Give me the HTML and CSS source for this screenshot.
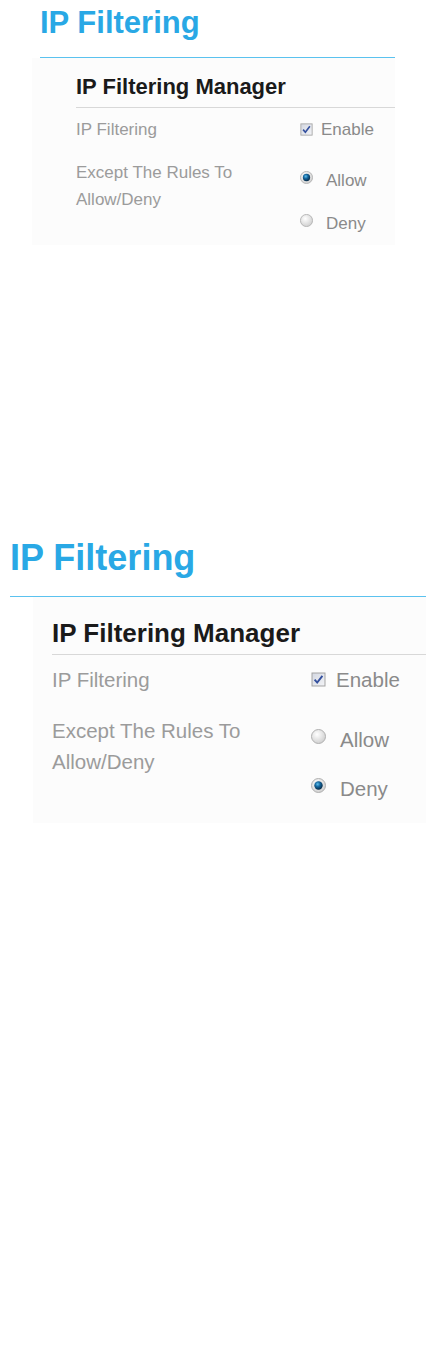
FILE: index.html
```html
<!DOCTYPE html>
<html lang="en">
<head>
<meta charset="utf-8">
<title>IP Filtering</title>
<link rel="stylesheet" href="styles.css">
</head>
<body>
<section class="view v1">
  <h1 class="title">IP Filtering</h1>
  <div class="panel">
    <h2 class="heading">IP Filtering Manager</h2>
    <div class="row row-first">
      <div class="label">IP Filtering</div>
      <div class="control">
        <div class="opt opt-check">
          <svg class="box" viewBox="0 0 15 15"><rect x="0.5" y="0.5" width="14" height="14" fill="#a3a3a3"/><rect x="1.5" y="1.5" width="12" height="12" fill="url(#gb1)"/><path d="M3.6 7.6 L6.2 10.6 L11.4 3.8" fill="none" stroke="#34509e" stroke-width="1.9"/><defs><linearGradient id="gb1" x1="0" y1="0" x2="1" y2="1"><stop offset="0" stop-color="#d4d8e2"/><stop offset="1" stop-color="#f2f3f6"/></linearGradient></defs></svg>
          <span class="otext">Enable</span>
        </div>
      </div>
    </div>
    <div class="row row-last">
      <div class="label">Except The Rules To<br>Allow/Deny</div>
      <div class="control">
        <div class="opt opt-radio">
          <svg class="radio" viewBox="0 0 15 15"><defs><radialGradient id="rg1" cx="0.4" cy="0.35" r="0.7"><stop offset="0" stop-color="#ffffff"/><stop offset="1" stop-color="#cdcdcd"/></radialGradient><radialGradient id="rd1" cx="0.4" cy="0.35" r="0.65"><stop offset="0" stop-color="#5fc0ee"/><stop offset="0.45" stop-color="#14679f"/><stop offset="1" stop-color="#082b47"/></radialGradient></defs><circle cx="7.5" cy="7.5" r="7" fill="url(#rg1)" stroke="#b0b0b0"/><circle cx="7.5" cy="7.5" r="4.2" fill="url(#rd1)"/></svg>
          <span class="otext rtext">Allow</span>
        </div>
        <div class="opt opt-radio">
          <svg class="radio" viewBox="0 0 15 15"><circle cx="7.5" cy="7.5" r="7" fill="url(#rg1)" stroke="#b0b0b0"/></svg>
          <span class="otext rtext">Deny</span>
        </div>
      </div>
    </div>
  </div>
</section>

<section class="view v2">
  <h1 class="title">IP Filtering</h1>
  <div class="panel">
    <h2 class="heading">IP Filtering Manager</h2>
    <div class="row row-first">
      <div class="label">IP Filtering</div>
      <div class="control">
        <div class="opt opt-check">
          <svg class="box" viewBox="0 0 15 15"><rect x="0.5" y="0.5" width="14" height="14" fill="#a3a3a3"/><rect x="1.5" y="1.5" width="12" height="12" fill="url(#gb1)"/><path d="M3.6 7.6 L6.2 10.6 L11.4 3.8" fill="none" stroke="#34509e" stroke-width="1.9"/></svg>
          <span class="otext">Enable</span>
        </div>
      </div>
    </div>
    <div class="row row-last">
      <div class="label">Except The Rules To<br>Allow/Deny</div>
      <div class="control">
        <div class="opt opt-radio">
          <svg class="radio" viewBox="0 0 15 15"><circle cx="7.5" cy="7.5" r="7" fill="url(#rg1)" stroke="#b0b0b0"/></svg>
          <span class="otext rtext">Allow</span>
        </div>
        <div class="opt opt-radio">
          <svg class="radio" viewBox="0 0 15 15"><circle cx="7.5" cy="7.5" r="7" fill="url(#rg1)" stroke="#b0b0b0"/><circle cx="7.5" cy="7.5" r="4.2" fill="url(#rd1)"/></svg>
          <span class="otext rtext">Deny</span>
        </div>
      </div>
    </div>
  </div>
</section>
</body>
</html>
```
FILE: styles.css
```css
html, body {
  margin: 0;
  padding: 0;
  background: #ffffff;
}
body {
  font-family: "Liberation Sans", Arial, sans-serif;
  width: 426px;
  height: 1349px;
  overflow: hidden;
}
.view {
  box-sizing: border-box;
}
.title {
  margin: 0;
  font-weight: bold;
  color: #29a8e5;
  border-bottom: 1px solid #5bc2ef;
}
.panel {
  background: #fcfcfc;
}
.heading {
  margin: 0;
  font-weight: bold;
  color: #1a1a1a;
  border-bottom: 1px solid #d8d8d8;
}
.row {
  display: grid;
}
.label {
  color: #9b9b9b;
}
.control {
  display: flex;
  flex-direction: column;
}
.opt {
  display: flex;
  align-items: flex-start;
}
.otext {
  color: #8a8a8a;
}
.box, .radio {
  flex: none;
  display: block;
}

/* small view */
.v1 {
  padding: 5px 31px 0 40px;
  width: 426px;
}
.v1 .title {
  font-size: 31px;
  line-height: 36px;
  padding-bottom: 16px;
}
.v1 .panel {
  margin-left: -8px;
  padding: 15px 0 0 44px;
}
.v1 .heading {
  font-size: 22px;
  line-height: 28px;
  padding-bottom: 6px;
}
.v1 .row {
  grid-template-columns: 224px 1fr;
  font-size: 17px;
  line-height: 27px;
  padding: 8px 0;
}
.v1 .row-last {
  padding-bottom: 0;
}
.v1 .box {
  width: 13px;
  height: 13px;
  margin: 7px 8px 0 0;
}
.v1 .opt-radio {
  padding: 8px 0;
}
.v1 .radio {
  width: 13px;
  height: 13px;
  margin: 4px 13px 0 0;
}

/* large view */
.v2 {
  margin-top: 275px;
  padding: 17px 0 0 10px;
  width: 426px;
}
.v2 .title {
  font-size: 36px;
  line-height: 42px;
  padding-bottom: 17px;
}
.v2 .panel {
  margin-left: 23px;
  padding: 20px 0 10px 19px;
}
.v2 .heading {
  font-size: 26px;
  line-height: 32px;
  padding-bottom: 5px;
}
.v2 .row {
  grid-template-columns: 259px 1fr;
  font-size: 20.5px;
  line-height: 31px;
  padding: 10px 0;
}
.v2 .row-first {
  padding-top: 9px;
}
.v2 .row-last {
  padding-bottom: 0;
}
.v2 .box {
  width: 15px;
  height: 15px;
  margin: 8px 10px 0 0;
}
.v2 .opt-radio {
  padding: 9px 0;
}
.v2 .radio {
  width: 15px;
  height: 15px;
  margin: 4.5px 14px 0 0;
}
```
